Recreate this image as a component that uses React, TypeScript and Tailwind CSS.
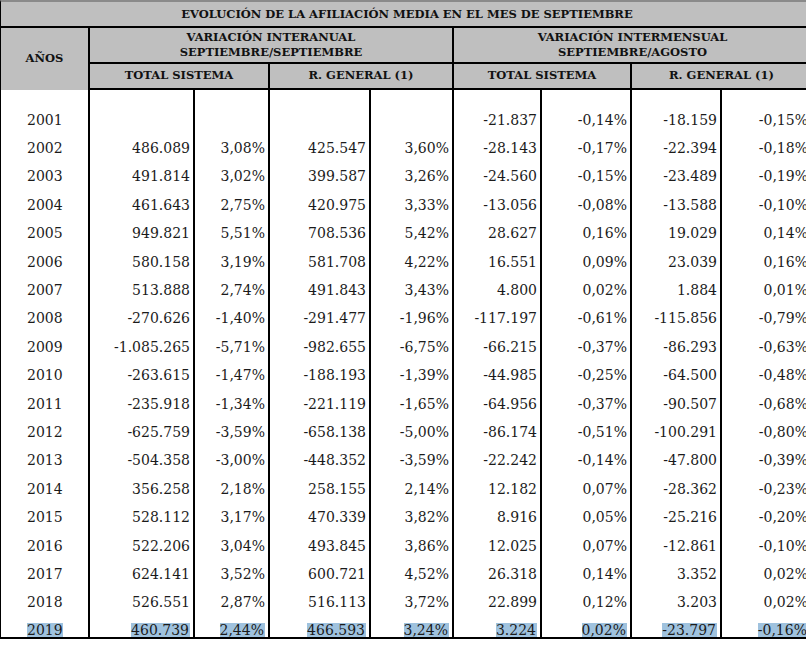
import React from 'react';

type Row = [string, string, string, string, string, string, string, string, string];

const ROWS: Row[] = [
  ['2001', '', '', '', '', '-21.837', '-0,14%', '-18.159', '-0,15%'],
  ['2002', '486.089', '3,08%', '425.547', '3,60%', '-28.143', '-0,17%', '-22.394', '-0,18%'],
  ['2003', '491.814', '3,02%', '399.587', '3,26%', '-24.560', '-0,15%', '-23.489', '-0,19%'],
  ['2004', '461.643', '2,75%', '420.975', '3,33%', '-13.056', '-0,08%', '-13.588', '-0,10%'],
  ['2005', '949.821', '5,51%', '708.536', '5,42%', '28.627', '0,16%', '19.029', '0,14%'],
  ['2006', '580.158', '3,19%', '581.708', '4,22%', '16.551', '0,09%', '23.039', '0,16%'],
  ['2007', '513.888', '2,74%', '491.843', '3,43%', '4.800', '0,02%', '1.884', '0,01%'],
  ['2008', '-270.626', '-1,40%', '-291.477', '-1,96%', '-117.197', '-0,61%', '-115.856', '-0,79%'],
  ['2009', '-1.085.265', '-5,71%', '-982.655', '-6,75%', '-66.215', '-0,37%', '-86.293', '-0,63%'],
  ['2010', '-263.615', '-1,47%', '-188.193', '-1,39%', '-44.985', '-0,25%', '-64.500', '-0,48%'],
  ['2011', '-235.918', '-1,34%', '-221.119', '-1,65%', '-64.956', '-0,37%', '-90.507', '-0,68%'],
  ['2012', '-625.759', '-3,59%', '-658.138', '-5,00%', '-86.174', '-0,51%', '-100.291', '-0,80%'],
  ['2013', '-504.358', '-3,00%', '-448.352', '-3,59%', '-22.242', '-0,14%', '-47.800', '-0,39%'],
  ['2014', '356.258', '2,18%', '258.155', '2,14%', '12.182', '0,07%', '-28.362', '-0,23%'],
  ['2015', '528.112', '3,17%', '470.339', '3,82%', '8.916', '0,05%', '-25.216', '-0,20%'],
  ['2016', '522.206', '3,04%', '493.845', '3,86%', '12.025', '0,07%', '-12.861', '-0,10%'],
  ['2017', '624.141', '3,52%', '600.721', '4,52%', '26.318', '0,14%', '3.352', '0,02%'],
  ['2018', '526.551', '2,87%', '516.113', '3,72%', '22.899', '0,12%', '3.203', '0,02%'],
  ['2019', '460.739', '2,44%', '466.593', '3,24%', '3.224', '0,02%', '-23.797', '-0,16%'],
];

const COLS = 'grid grid-cols-[89px_105px_75px_101px_83px_88px_90px_90px_91px]';

export default function App() {
  return (
    <div className="w-[806px] h-[656px] overflow-hidden bg-white font-['DejaVu_Serif',serif]">
      <div className="w-[812px] border-l border-t-2 border-l-black border-t-[#8a8a8a]">
        {/* header */}
        <div className={`${COLS} bg-[#bfbfbf] text-[#111] font-bold text-[11.5px]`}>
          <div className="col-span-9 h-[26px] border-b-2 border-black flex items-center justify-center pt-[1px]">
            EVOLUCIÓN DE LA AFILIACIÓN MEDIA EN EL MES DE SEPTIEMBRE
          </div>
          <div className="row-span-2 border-r-2 border-black flex items-center justify-center">AÑOS</div>
          <div className="col-span-4 h-[36px] border-r-2 border-b-2 border-black flex flex-col items-center justify-center leading-[15px]">
            <span>VARIACIÓN INTERANUAL</span>
            <span>SEPTIEMBRE/SEPTIEMBRE</span>
          </div>
          <div className="col-span-4 h-[36px] border-r-2 border-b-2 border-black flex flex-col items-center justify-center leading-[15px]">
            <span>VARIACIÓN INTERMENSUAL</span>
            <span>SEPTIEMBRE/AGOSTO</span>
          </div>
          <div className="col-span-2 h-[26px] border-r-2 border-b-2 border-black flex items-center justify-center">TOTAL SISTEMA</div>
          <div className="col-span-2 h-[26px] border-r-2 border-b-2 border-black flex items-center justify-center">R. GENERAL (1)</div>
          <div className="col-span-2 h-[26px] border-r-2 border-b-2 border-black flex items-center justify-center">TOTAL SISTEMA</div>
          <div className="col-span-2 h-[26px] border-r-2 border-b-2 border-black flex items-center justify-center">R. GENERAL (1)</div>
        </div>

        {/* body */}
        <div className={`${COLS} border-b-2 border-black text-[14px] text-[#1b1b1b]`}>
          {Array.from({ length: 9 }).map((_, i) => (
            <div key={`sp-${i}`} className="h-[16px] border-r-2 border-black" />
          ))}
          {ROWS.map((row, r) => {
            const last = r === ROWS.length - 1;
            return row.map((cell, c) => (
              <div
                key={`${r}-${c}`}
                className={`border-r-2 border-black flex ${
                  last ? 'h-[20px] items-end' : 'h-[28.4px] items-center'
                } ${c === 0 ? 'justify-start pl-[26px]' : 'justify-end pr-[3px]'}`}
              >
                {last ? (
                  <span className={`bg-[#9fc2de] leading-[14px] ${c === 0 ? '' : 'pr-[1px]'}`}>{cell}</span>
                ) : (
                  <span>{cell}</span>
                )}
              </div>
            ));
          })}
        </div>
      </div>
    </div>
  );
}
